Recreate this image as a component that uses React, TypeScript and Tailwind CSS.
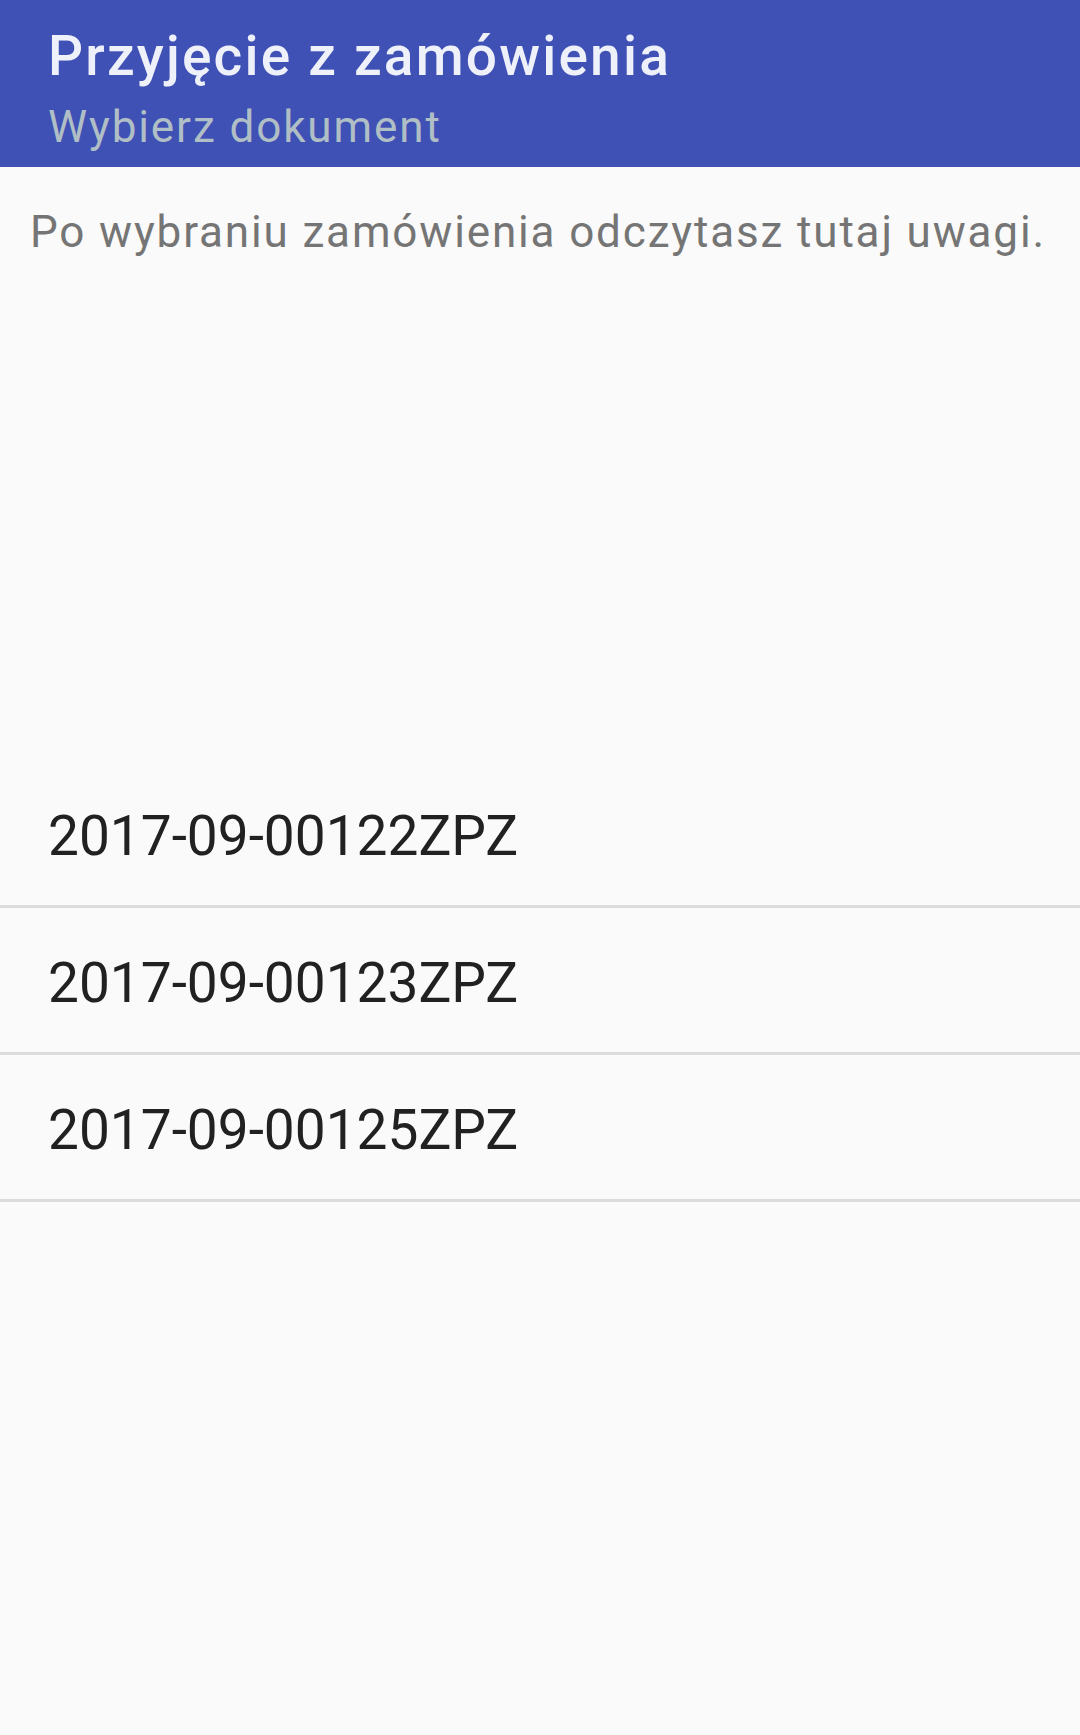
const orders = ["2017-09-00122ZPZ", "2017-09-00123ZPZ", "2017-09-00125ZPZ"];

export default function App() {
  return (
    <div className="min-h-[1735px] w-[1080px] bg-[#fafafa] font-['Roboto',sans-serif]">
      {/* toolbar */}
      <header className="h-[167px] bg-[#3f51b5] pl-[48px] pt-[24px]">
        <h1 className="text-[55px] leading-[64px] font-medium tracking-[2.2px] text-[#eef0fa]">
          Przyjęcie z zamówienia
        </h1>
        <p className="mt-[13px] text-[44px] leading-[52px] tracking-[1.9px] text-[#b0bec5]">
          Wybierz dokument
        </p>
      </header>

      {/* remarks */}
      <div className="h-[594px] pl-[30px] pt-[39px]">
        <p className="text-[44px] leading-[52px] tracking-[1.85px] text-[#757575]">
          Po wybraniu zamówienia odczytasz tutaj uwagi.
        </p>
      </div>

      {/* order list */}
      <ul>
        {orders.map((o) => (
          <li
            key={o}
            className="h-[147px] border-b-[3px] border-[#dcdcdc] pl-[48px] pt-[43px]"
          >
            <span className="text-[55px] leading-[64px] text-[#212121]">{o}</span>
          </li>
        ))}
      </ul>
    </div>
  );
}
